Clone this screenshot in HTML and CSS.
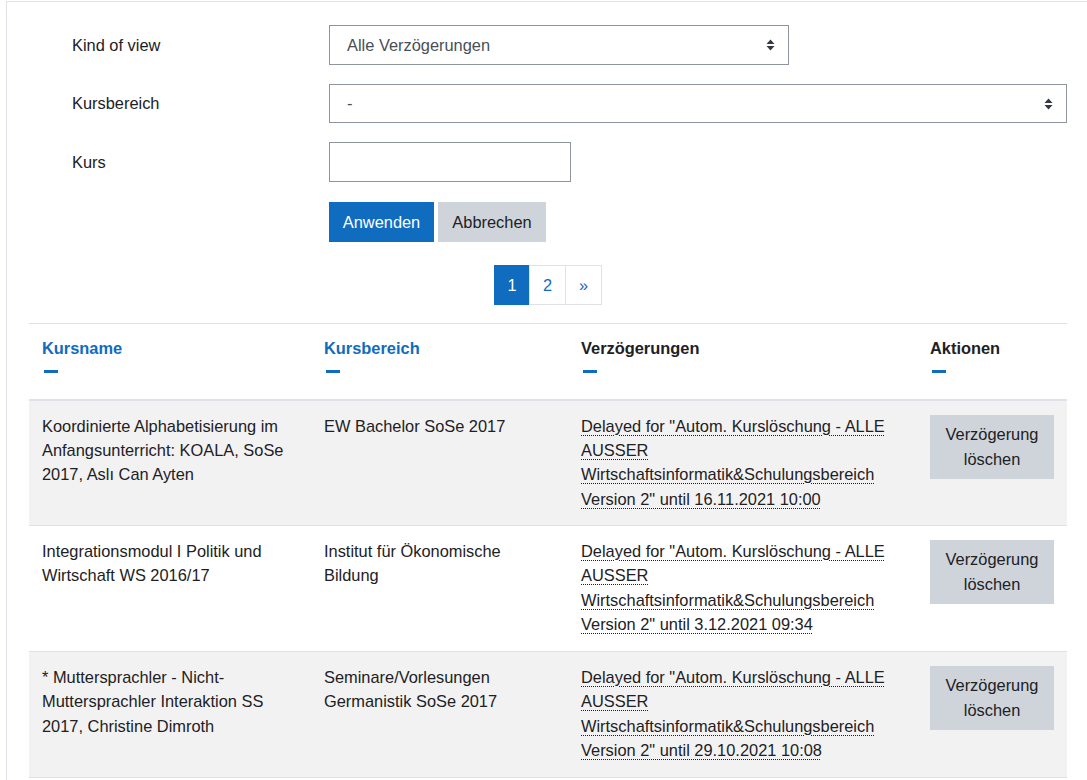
FILE: index.html
```html
<!DOCTYPE html>
<html lang="de">
<head>
<meta charset="utf-8">
<title>Verzögerungen</title>
<link rel="stylesheet" href="styles.css">
</head>
<body>
<div class="page">
  <div class="box">
    <form class="filter">
      <div class="frow">
        <label class="flabel">Kind of view</label>
        <div class="select sel-short">
          <span>Alle Verzögerungen</span>
          <svg class="caret" width="9" height="12" viewBox="0 0 9 12"><path d="M4.5 0.5 L8.5 5 L0.5 5 Z M0.5 7 L8.5 7 L4.5 11.5 Z" fill="#343a40"/></svg>
        </div>
      </div>
      <div class="frow">
        <label class="flabel">Kursbereich</label>
        <div class="select sel-full">
          <span>-</span>
          <svg class="caret" width="9" height="12" viewBox="0 0 9 12"><path d="M4.5 0.5 L8.5 5 L0.5 5 Z M0.5 7 L8.5 7 L4.5 11.5 Z" fill="#343a40"/></svg>
        </div>
      </div>
      <div class="frow">
        <label class="flabel">Kurs</label>
        <div class="textin"></div>
      </div>
      <div class="frow btnrow">
        <span class="flabel"></span>
        <div class="btns">
          <span class="btn btn-primary">Anwenden</span>
          <span class="btn btn-secondary">Abbrechen</span>
        </div>
      </div>
    </form>

    <nav class="pager">
      <span class="pg active">1</span>
      <span class="pg">2</span>
      <span class="pg">»</span>
    </nav>

    <table class="tbl">
      <colgroup>
        <col class="c1"><col class="c2"><col class="c3"><col class="c4">
      </colgroup>
      <thead>
        <tr>
          <th><span class="sortlink">Kursname</span><span class="dash"></span></th>
          <th><span class="sortlink">Kursbereich</span><span class="dash"></span></th>
          <th><span>Verzögerungen</span><span class="dash"></span></th>
          <th><span>Aktionen</span><span class="dash"></span></th>
        </tr>
      </thead>
      <tbody>
        <tr class="odd">
          <td>Koordinierte Alphabetisierung im Anfangsunterricht: KOALA, SoSe 2017, Aslı Can Ayten</td>
          <td>EW Bachelor SoSe 2017</td>
          <td><abbr class="delay">Delayed for "Autom. Kurslöschung - ALLE AUSSER Wirtschaftsinformatik&amp;Schulungsbereich Version 2" until 16.11.2021 10:00</abbr></td>
          <td><span class="btn btn-secondary btn-del">Verzögerung löschen</span></td>
        </tr>
        <tr>
          <td>Integrationsmodul I Politik und Wirtschaft WS 2016/17</td>
          <td>Institut für Ökonomische Bildung</td>
          <td><abbr class="delay">Delayed for "Autom. Kurslöschung - ALLE AUSSER Wirtschaftsinformatik&amp;Schulungsbereich Version 2" until 3.12.2021 09:34</abbr></td>
          <td><span class="btn btn-secondary btn-del">Verzögerung löschen</span></td>
        </tr>
        <tr class="odd">
          <td>* Muttersprachler - Nicht-Muttersprachler Interaktion SS 2017, Christine Dimroth</td>
          <td>Seminare/Vorlesungen Germanistik SoSe 2017</td>
          <td><abbr class="delay">Delayed for "Autom. Kurslöschung - ALLE AUSSER Wirtschaftsinformatik&amp;Schulungsbereich Version 2" until 29.10.2021 10:08</abbr></td>
          <td><span class="btn btn-secondary btn-del">Verzögerung löschen</span></td>
        </tr>
      </tbody>
    </table>
  </div>
</div>
</body>
</html>
```

FILE: styles.css
```css
* { box-sizing: border-box; }
html, body { margin: 0; padding: 0; background: #fff; }
body {
  font-family: "Liberation Sans", Arial, sans-serif;
  font-size: 16.4px;
  line-height: 1.49;
  color: #1d2125;
}
.page { padding: 1px 0 0 6px; }
.box {
  border-top: 1px solid #dee2e6;
  border-left: 1px solid #dee2e6;
  padding: 23px 20px 0 22px;
  min-height: 800px;
}
.filter { padding-left: 43px; width: 1038px; }
.frow { display: flex; align-items: center; margin-bottom: 19px; }
.frow:nth-child(2) { margin-bottom: 19px; }
.frow:nth-child(3) { margin-bottom: 20px; }
.flabel { width: 257px; flex: none; }
.select {
  position: relative;
  height: 40px;
  border: 1px solid #8f959e;
  display: flex;
  align-items: center;
  padding: 0 17px;
  color: #495057;
}
.sel-short { width: 460px; }
.sel-full { width: 738px; height: 39px; }
.caret { position: absolute; right: 13px; top: 50%; margin-top: -6px; }
.textin { width: 242px; height: 40px; border: 1px solid #8f959e; }
.btns { display: flex; gap: 4px; }
.btn {
  display: inline-flex;
  align-items: center;
  justify-content: center;
  height: 40px;
  padding: 0 14px;
  border: none;
}
.btn-primary { background: #0f6cbf; color: #fff; width: 105px; }
.btn-secondary { background: #ced4da; color: #1d2125; width: 108px; }
.pager {
  display: flex;
  justify-content: center;
  margin: 23px 0 0 0;
  width: 1038px;
}
.pg {
  width: 37px;
  height: 40px;
  display: flex;
  align-items: center;
  justify-content: center;
  border: 1px solid #dee2e6;
  margin-left: -1px;
  color: #0f6cbf;
  background: #fff;
}
.pg:first-child { margin-left: 0; width: 36px; }
.pg.active { background: #0f6cbf; border-color: #0f6cbf; color: #fff; }
.tbl {
  margin-top: 18px;
  width: 1038px;
  border-collapse: collapse;
  table-layout: fixed;
}
.c1 { width: 282px; }
.c2 { width: 257px; }
.c3 { width: 349px; }
.c4 { width: 150px; }
.tbl th {
  text-align: left;
  vertical-align: top;
  font-weight: bold;
  padding: 12px 13px 14px 13px;
  border-top: 1px solid #dee2e6;
  border-bottom: 2px solid #dee2e6;
  height: 76px;
}
.tbl th span { display: block; }
.sortlink { color: #0f6cbf; }
.tbl th .dash {
  width: 14px;
  height: 3px;
  background: #0f6cbf;
  margin: 10px 0 0 2px;
}
.tbl td {
  vertical-align: top;
  padding: 13px 13px 12px 13px;
  border-top: 1px solid #dee2e6;
  height: 126px;
}
.tbl tr.odd td { background: #f2f2f2; }
.tbl tbody tr:last-child td { border-bottom: 1px solid #dee2e6; }
.delay {
  text-decoration: underline dotted;
  text-underline-offset: 3px;
  text-decoration-thickness: 1px;
}
.btn-del {
  width: 124px;
  height: 64px;
  padding: 6px 10px;
  text-align: center;
  line-height: 1.5;
  margin-top: 1px;
}
```
